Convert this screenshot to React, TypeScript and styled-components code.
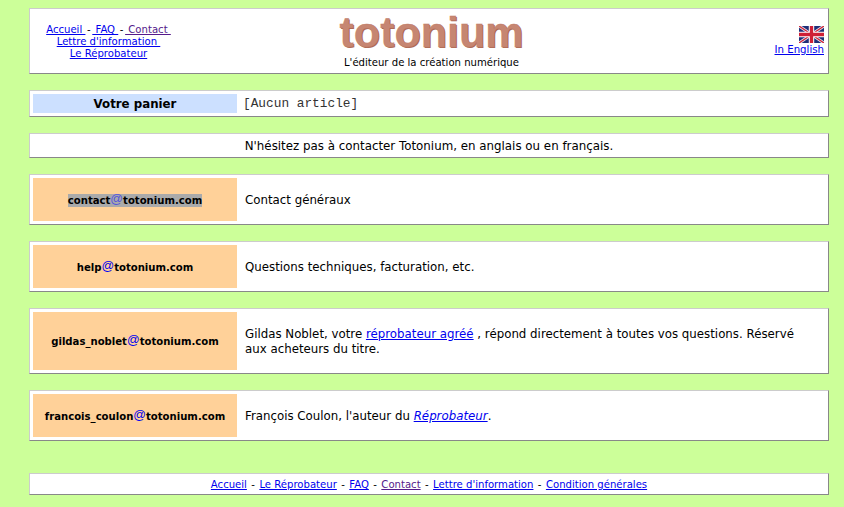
import React from "react";
import styled, { createGlobalStyle } from "styled-components";

const GlobalStyle = createGlobalStyle`
  html, body {
    margin: 0;
    padding: 0;
    background: #ccff99;
  }
  body {
    font-family: "DejaVu Sans", Verdana, sans-serif;
    color: #000;
  }
  a {
    color: #0000ee;
  }
`;

const Page = styled.div`
  display: flex;
  flex-direction: column;
  gap: 16px;
  width: 800px;
  margin-left: 29px;
  padding: 8px 0 12px;
`;

const Box = styled.section`
  box-sizing: border-box;
  background: #fff;
  border: 1px solid;
  border-color: #ccc #888 #888 #ccc;
  padding: 3px;
`;

const HeaderBox = styled(Box)`
  display: grid;
  grid-template-columns: 1fr auto 1fr;
  height: 66px;
  padding: 0 4px 0 0;
`;

const QuickLinks = styled.nav`
  width: 125px;
  margin: 15px 0 0 16px;
  font-size: 10.1px;
  line-height: 12px;
  text-align: center;
  white-space: nowrap;
`;

const LinkLine = styled.div``;

const Dash = styled.span`
  margin: 0 1.6px;
`;

const Brand = styled.div`
  margin-left: 9px;
  text-align: center;
`;

const Logo = styled.div`
  font-family: "Liberation Sans", Arial, sans-serif;
  font-size: 43px;
  font-weight: bold;
  line-height: 46px;
  color: #c68672;
  text-shadow: 1px 1px 0 #ad6a55;
  -webkit-text-stroke: 0.3px #c07c68;
`;

const Tagline = styled.div`
  font-size: 10.1px;
  line-height: 12px;
  margin-top: 2px;
`;

const Language = styled.div`
  justify-self: end;
  margin-top: 17px;
  font-size: 10.2px;
  line-height: 12px;
  text-align: right;
`;

const Flag = styled.svg`
  display: block;
  width: 25px;
  height: 17px;
  margin: 0 0 1px auto;
`;

const CartBox = styled(Box)`
  display: flex;
  align-items: stretch;
  height: 27px;
`;

const CartLabel = styled.div`
  display: flex;
  align-items: center;
  justify-content: center;
  width: 204px;
  background: #cce0ff;
  font-size: 11.8px;
  font-weight: bold;
`;

const CartValue = styled.div`
  display: flex;
  align-items: center;
  margin-left: 6px;
  font-family: "Liberation Mono", "Courier New", monospace;
  font-size: 12.8px;
  color: #333;
`;

const Notice = styled(Box)`
  height: 25px;
  padding: 0;
  font-size: 11.85px;
  line-height: 24px;
  text-align: center;
`;

const ContactBox = styled(Box)`
  display: flex;
  align-items: stretch;
`;

const Email = styled.div`
  flex: none;
  display: flex;
  align-items: center;
  justify-content: center;
  box-sizing: border-box;
  width: 204px;
  padding-top: 1px;
  background: #ffd199;
  font-size: 10.1px;
  font-weight: bold;
`;

const EmailText = styled.span<{ $selected?: boolean }>`
  background: ${(p) => (p.$selected ? "#aaa" : "transparent")};
  line-height: 13px;
`;

const At = styled.span<{ $selected?: boolean }>`
  font-family: "Liberation Sans", Arial, sans-serif;
  font-size: 12.5px;
  font-weight: normal;
  color: ${(p) => (p.$selected ? "#5555dd" : "#0000ee")};
  position: relative;
  top: -1px;
`;

const Description = styled.div`
  flex: 1;
  padding: 15px 10px 13px 8px;
  font-size: 11.8px;
  line-height: 15px;
`;

const DescriptionText = styled.p`
  margin: 0;
`;

const Footer = styled(Box)`
  height: 22px;
  margin-top: 16px;
  padding: 0;
  font-size: 10.1px;
  line-height: 21px;
  text-align: center;
`;

const Sep = styled.span`
  margin: 0 1.2px;
`;

const VisitedLink = styled.a`
  color: #551a8b;
`;

const UkFlag = () => (
  <Flag viewBox="0 0 60 40" preserveAspectRatio="none" aria-label="Drapeau anglais">
    <rect width="60" height="40" fill="#1f2f78" />
    <path d="M0 0L60 40M60 0L0 40" stroke="#e8e8f0" strokeWidth="7" />
    <path d="M0 0L60 40M60 0L0 40" stroke="#cf1f35" strokeWidth="3" />
    <path d="M30 0V40M0 20H60" stroke="#fff" strokeWidth="13" />
    <path d="M30 0V40M0 20H60" stroke="#cf1f35" strokeWidth="8" />
  </Flag>
);

const contacts = [
  { user: "contact", selected: true, text: <>Contact généraux</> },
  { user: "help", text: <>Questions techniques, facturation, etc.</> },
  {
    user: "gildas_noblet",
    text: (
      <>
        Gildas Noblet, votre <a href="#">réprobateur agréé</a> , répond directement à toutes vos questions. Réservé aux acheteurs du titre.
      </>
    ),
  },
  {
    user: "francois_coulon",
    text: (
      <>
        François Coulon, l'auteur du <a href="#"><em>Réprobateur</em></a>.
      </>
    ),
  },
];

export default function App() {
  return (
    <>
      <GlobalStyle />
      <Page>
        <HeaderBox>
          <QuickLinks>
            <LinkLine>
              <a href="#">Accueil&nbsp;</a>
              <Dash>-</Dash>
              <a href="#">&nbsp;FAQ&nbsp;</a>
              <Dash>-</Dash>
              <VisitedLink href="#">&nbsp;Contact&nbsp;</VisitedLink>
            </LinkLine>
            <LinkLine>
              <a href="#">Lettre d'information&nbsp;</a>
            </LinkLine>
            <LinkLine>
              <a href="#">Le Réprobateur</a>
            </LinkLine>
          </QuickLinks>
          <Brand>
            <Logo>totonium</Logo>
            <Tagline>L'éditeur de la création numérique</Tagline>
          </Brand>
          <Language>
            <UkFlag />
            <a href="#">In English</a>
          </Language>
        </HeaderBox>

        <CartBox>
          <CartLabel>Votre panier</CartLabel>
          <CartValue>[Aucun article]</CartValue>
        </CartBox>

        <Notice>N'hésitez pas à contacter Totonium, en anglais ou en français.</Notice>

        {contacts.map((c) => (
          <ContactBox key={c.user}>
            <Email>
              <EmailText $selected={c.selected}>
                {c.user}
                <At $selected={c.selected}>@</At>
                totonium.com
              </EmailText>
            </Email>
            <Description>
              <DescriptionText>{c.text}</DescriptionText>
            </Description>
          </ContactBox>
        ))}

        <Footer>
          <a href="#">Accueil</a> <Sep>-</Sep> <a href="#">Le Réprobateur</a> <Sep>-</Sep> <a href="#">FAQ</a> <Sep>-</Sep> <VisitedLink href="#">Contact</VisitedLink> <Sep>-</Sep> <a href="#">Lettre d'information</a> <Sep>-</Sep> <a href="#">Condition générales</a>
        </Footer>
      </Page>
    </>
  );
}
